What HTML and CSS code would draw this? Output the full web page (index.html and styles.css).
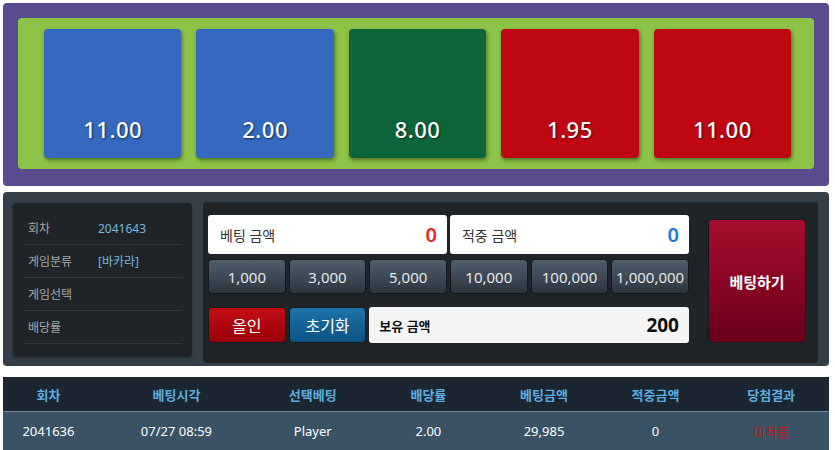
FILE: index.html
```html
<!DOCTYPE html>
<html lang="ko">
<head>
  <meta charset="UTF-8" />
  <title>바카라 베팅</title>
  <link rel="stylesheet" href="styles.css">
</head>
<body>
  <div class="page">

    <div class="board">
      <div class="felt">
        <div class="pick blue">11.00</div>
        <div class="pick blue">2.00</div>
        <div class="pick green">8.00</div>
        <div class="pick red">1.95</div>
        <div class="pick red">11.00</div>
      </div>
    </div>

    <div class="bet-panel">
      <div class="round-info">
        <div class="info-row"><span class="info-label">회차</span><span class="info-value">2041643</span></div>
        <div class="info-row"><span class="info-label">게임분류</span><span class="info-value">[바카라]</span></div>
        <div class="info-row"><span class="info-label">게임선택</span><span class="info-value"></span></div>
        <div class="info-row"><span class="info-label">배당률</span><span class="info-value"></span></div>
      </div>

      <div class="bet-box">
        <div class="bet-grid">
          <div class="amount-field wide">
            <span>베팅 금액</span>
            <strong class="amount-bet">0</strong>
          </div>
          <div class="amount-field wide">
            <span>적중 금액</span>
            <strong class="amount-win">0</strong>
          </div>

          <button class="chip">1,000</button>
          <button class="chip">3,000</button>
          <button class="chip">5,000</button>
          <button class="chip">10,000</button>
          <button class="chip">100,000</button>
          <button class="chip">1,000,000</button>

          <button class="action all-in">올인</button>
          <button class="action reset">초기화</button>
          <div class="balance-field">
            <span>보유 금액</span>
            <strong>200</strong>
          </div>
        </div>

        <button class="place-bet">베팅하기</button>
      </div>
    </div>

    <table class="history">
      <thead>
        <tr>
          <th class="c1">회차</th>
          <th class="c2">베팅시각</th>
          <th class="c3">선택베팅</th>
          <th class="c4">배당률</th>
          <th class="c5">베팅금액</th>
          <th class="c6">적중금액</th>
          <th class="c7">당첨결과</th>
        </tr>
      </thead>
      <tbody>
        <tr>
          <td>2041636</td>
          <td>07/27 08:59</td>
          <td>Player</td>
          <td>2.00</td>
          <td>29,985</td>
          <td>0</td>
          <td class="miss">미적중</td>
        </tr>
      </tbody>
    </table>

  </div>
</body>
</html>
```

FILE: styles.css
```css
body {
  margin: 0;
  background: #ffffff;
  font-family: "Noto Sans", "Noto Sans CJK KR", sans-serif;
  color: #333;
}

.page {
  padding: 3px 6px 0 3px;
}

/* odds board */
.board {
  background: #5a4c8f;
  border-radius: 4px;
  padding: 15px 15px 17px;
}

.felt {
  background: #8dc447;
  border-radius: 4px;
  padding: 11px 23px 11px 26px;
  display: flex;
  gap: 15px;
}

.pick {
  flex: 1;
  height: 129px;
  border-radius: 4px;
  box-shadow: 1px 2px 4px rgba(0, 0, 0, 0.45);
  color: #fff;
  font-size: 22px;
  font-weight: 500;
  letter-spacing: 0.5px;
  text-shadow: 1px 1px 2px rgba(0, 0, 0, 0.6);
  display: flex;
  align-items: flex-end;
  justify-content: center;
  padding-bottom: 14px;
  box-sizing: border-box;
}

.pick.blue { background: #3469bf; }
.pick.green { background: #0c6639; }
.pick.red { background: #be0712; }

/* bet panel */
.bet-panel {
  margin-top: 6px;
  background: #353f47;
  border-radius: 4px;
  padding: 10px 11px 3px 10px;
  display: flex;
  gap: 11px;
  align-items: flex-start;
}

.round-info {
  width: 179px;
  margin-top: 1px;
  background: #1f2428;
  border-radius: 4px;
  padding: 9px 10px 13px;
  box-sizing: border-box;
  box-shadow: 0 1px 3px rgba(0, 0, 0, 0.35);
}

.info-row {
  display: flex;
  height: 32px;
  align-items: center;
  border-bottom: 1px solid #30363b;
  padding-left: 5px;
  font-size: 12px;
}

.info-label {
  width: 70px;
  color: #a3a8ac;
}

.info-value {
  color: #78b8dc;
}

.bet-box {
  flex: 1;
  height: 161px;
  background: #1f2428;
  border-radius: 4px;
  padding: 13px 12px 0 5px;
  box-sizing: border-box;
  display: flex;
  gap: 19px;
}

.bet-grid {
  width: 481px;
  display: grid;
  grid-template-columns: repeat(6, 1fr);
  grid-template-rows: 39px 35px 44px;
  gap: 5px 3px;
}

.amount-field {
  grid-column: span 3;
  background: #fff;
  border-radius: 3px;
  display: flex;
  align-items: center;
  justify-content: space-between;
  padding: 0 10px 0 12px;
  font-size: 14px;
  color: #333;
}

.amount-field strong {
  font-size: 20px;
  font-weight: 600;
}

.amount-bet { color: #e8262d; }
.amount-win { color: #1e7be0; }

.chip {
  font-family: inherit;
  font-size: 15px;
  color: #e2e6e9;
  background: linear-gradient(#4f5f6c, #2b353e);
  border: 1px solid #15191c;
  border-radius: 4px;
  padding: 0;
}

.action {
  align-self: end;
  height: 36px;
  font-family: inherit;
  font-size: 16px;
  color: #fff;
  border: 1px solid #15191c;
  border-radius: 4px;
  padding: 0;
}

.all-in { background: linear-gradient(#c40d15, #980008); }
.reset { background: linear-gradient(#1b74aa, #0c5283); }

.balance-field {
  grid-column: span 4;
  align-self: end;
  height: 36px;
  background: #f5f5f5;
  border-radius: 3px;
  display: flex;
  align-items: center;
  justify-content: space-between;
  padding: 0 10px 0 10px;
  font-size: 13px;
  font-weight: 600;
  color: #111;
}

.balance-field strong {
  font-size: 19px;
  font-weight: 700;
}

.place-bet {
  width: 98px;
  height: 124px;
  margin-top: 4px;
  font-family: inherit;
  font-size: 15px;
  font-weight: 700;
  color: #fff;
  background: linear-gradient(#a60d2e, #6b0019);
  border: 1px solid #15191c;
  border-radius: 4px;
}

/* bet history */
.history {
  width: 100%;
  margin-top: 11px;
  border-collapse: collapse;
  font-size: 13px;
}

.history th {
  height: 32px;
  background: #1c2630;
  color: #5aaee2;
  font-weight: 700;
  border-bottom: 1px solid #71879a;
}

.history td {
  height: 36px;
  background: #3a5264;
  color: #fff;
  text-align: center;
}

.history .miss { color: #d0121b; }

.c1 { width: 11%; }
.c2 { width: 20%; }
.c3 { width: 13%; }
.c4 { width: 15%; }
.c5 { width: 13%; }
.c6 { width: 14%; }
.c7 { width: 14%; }
```
